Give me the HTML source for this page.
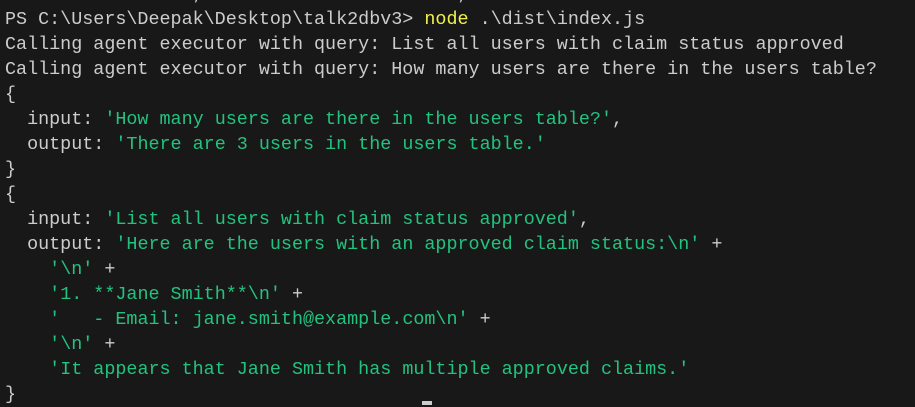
<!DOCTYPE html>
<html><head><meta charset="utf-8"><style>
html,body{margin:0;padding:0;background:#181818;width:915px;height:405px;overflow:hidden}
pre{margin:0;position:absolute;left:5px;top:-18px;font-family:"Liberation Mono",monospace;font-size:18.4px;line-height:25px;color:#cccccc}
.g{color:#23c27f}.y{color:#f1f14c}
.cur{position:absolute;left:422px;top:401px;width:10px;height:4px;background:#cccccc}
</style></head><body>
<pre>  C   ^    '     ,   o      .     '      ,
PS C:\Users\Deepak\Desktop\talk2dbv3&gt; <span class="y">node</span> .\dist\index.js
Calling agent executor with query: List all users with claim status approved
Calling agent executor with query: How many users are there in the users table?
{
  input: <span class="g">'How many users are there in the users table?'</span>,
  output: <span class="g">'There are 3 users in the users table.'</span>
}
{
  input: <span class="g">'List all users with claim status approved'</span>,
  output: <span class="g">'Here are the users with an approved claim status:\n'</span> +
    <span class="g">'\n'</span> +
    <span class="g">'1. **Jane Smith**\n'</span> +
    <span class="g">'   - Email: jane.smith@example.com\n'</span> +
    <span class="g">'\n'</span> +
    <span class="g">'It appears that Jane Smith has multiple approved claims.'</span>
}</pre>
<div class="cur"></div>
</body></html>
